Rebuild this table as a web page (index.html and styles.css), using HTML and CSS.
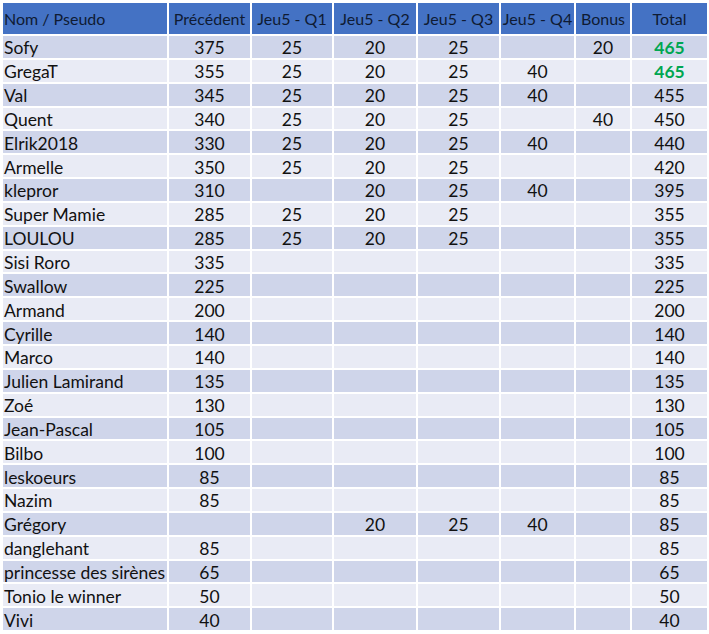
FILE: index.html
```html
<!DOCTYPE html>
<html lang="fr">
<head>
<meta charset="utf-8">
<title>Classement</title>
<link rel="stylesheet" href="styles.css">
</head>
<body>
<table class="scores">
  <colgroup>
    <col class="c-name"><col class="c-prev"><col class="c-q1"><col class="c-q2"><col class="c-q3"><col class="c-q4"><col class="c-bonus"><col class="c-total">
  </colgroup>
  <thead>
    <tr><th class="name">Nom / Pseudo</th><th>Précédent</th><th>Jeu5 - Q1</th><th>Jeu5 - Q2</th><th>Jeu5 - Q3</th><th>Jeu5 - Q4</th><th>Bonus</th><th>Total</th></tr>
  </thead>
  <tbody>
    <tr><td class="name">Sofy</td><td>375</td><td>25</td><td>20</td><td>25</td><td></td><td>20</td><td class="win">465</td></tr>
    <tr><td class="name">GregaT</td><td>355</td><td>25</td><td>20</td><td>25</td><td>40</td><td></td><td class="win">465</td></tr>
    <tr><td class="name">Val</td><td>345</td><td>25</td><td>20</td><td>25</td><td>40</td><td></td><td>455</td></tr>
    <tr><td class="name">Quent</td><td>340</td><td>25</td><td>20</td><td>25</td><td></td><td>40</td><td>450</td></tr>
    <tr><td class="name">Elrik2018</td><td>330</td><td>25</td><td>20</td><td>25</td><td>40</td><td></td><td>440</td></tr>
    <tr><td class="name">Armelle</td><td>350</td><td>25</td><td>20</td><td>25</td><td></td><td></td><td>420</td></tr>
    <tr><td class="name">klepror</td><td>310</td><td></td><td>20</td><td>25</td><td>40</td><td></td><td>395</td></tr>
    <tr><td class="name">Super Mamie</td><td>285</td><td>25</td><td>20</td><td>25</td><td></td><td></td><td>355</td></tr>
    <tr><td class="name">LOULOU</td><td>285</td><td>25</td><td>20</td><td>25</td><td></td><td></td><td>355</td></tr>
    <tr><td class="name">Sisi Roro</td><td>335</td><td></td><td></td><td></td><td></td><td></td><td>335</td></tr>
    <tr><td class="name">Swallow</td><td>225</td><td></td><td></td><td></td><td></td><td></td><td>225</td></tr>
    <tr><td class="name">Armand</td><td>200</td><td></td><td></td><td></td><td></td><td></td><td>200</td></tr>
    <tr><td class="name">Cyrille</td><td>140</td><td></td><td></td><td></td><td></td><td></td><td>140</td></tr>
    <tr><td class="name">Marco</td><td>140</td><td></td><td></td><td></td><td></td><td></td><td>140</td></tr>
    <tr><td class="name">Julien Lamirand</td><td>135</td><td></td><td></td><td></td><td></td><td></td><td>135</td></tr>
    <tr><td class="name">Zoé</td><td>130</td><td></td><td></td><td></td><td></td><td></td><td>130</td></tr>
    <tr><td class="name">Jean-Pascal</td><td>105</td><td></td><td></td><td></td><td></td><td></td><td>105</td></tr>
    <tr><td class="name">Bilbo</td><td>100</td><td></td><td></td><td></td><td></td><td></td><td>100</td></tr>
    <tr><td class="name">leskoeurs</td><td>85</td><td></td><td></td><td></td><td></td><td></td><td>85</td></tr>
    <tr><td class="name">Nazim</td><td>85</td><td></td><td></td><td></td><td></td><td></td><td>85</td></tr>
    <tr><td class="name">Grégory</td><td></td><td></td><td>20</td><td>25</td><td>40</td><td></td><td>85</td></tr>
    <tr><td class="name">danglehant</td><td>85</td><td></td><td></td><td></td><td></td><td></td><td>85</td></tr>
    <tr><td class="name">princesse des sirènes</td><td>65</td><td></td><td></td><td></td><td></td><td></td><td>65</td></tr>
    <tr><td class="name">Tonio le winner</td><td>50</td><td></td><td></td><td></td><td></td><td></td><td>50</td></tr>
    <tr><td class="name">Vivi</td><td>40</td><td></td><td></td><td></td><td></td><td></td><td>40</td></tr>
  </tbody>
</table>
</body>
</html>
```

FILE: styles.css
```css
html, body {
  margin: 0;
  padding: 0;
  background: #ffffff;
}

.scores {
  margin: 1px 0 0 1px;
  border-collapse: separate;
  border-spacing: 2px;
  table-layout: fixed;
  width: 708px;
  font-family: Lato, "Liberation Sans", sans-serif;
  font-size: 17.5px;
  color: #111111;
}

.c-name { width: 164px; }
.c-prev { width: 81px; }
.c-q1 { width: 80px; }
.c-q2 { width: 82px; }
.c-q3 { width: 81px; }
.c-q4 { width: 73px; }
.c-bonus { width: 54px; }
.c-total { width: 75px; }

.scores th,
.scores td {
  padding: 0;
  text-align: center;
  white-space: nowrap;
  overflow: hidden;
}

.scores th {
  background: #4472c4;
  height: 31px;
  font-size: 16px;
  font-weight: normal;
  color: #0f1b33;
}

.scores td {
  box-sizing: border-box;
  height: 21.85px;
  line-height: 19px;
  padding-top: 2px;
}

.scores tbody tr:nth-child(odd) td {
  background: #cfd5ea;
}

.scores tbody tr:nth-child(even) td {
  background: #e9ebf5;
}

.scores .name {
  text-align: left;
  padding-left: 1px;
}

.scores .win {
  color: #00a651;
  font-weight: bold;
}
```
